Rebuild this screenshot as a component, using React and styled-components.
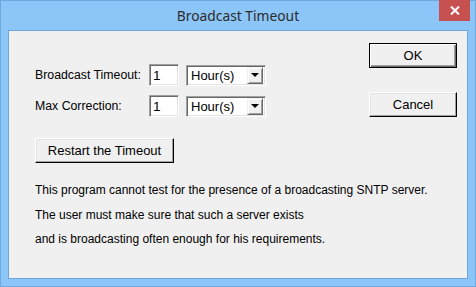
import React from "react";
import styled, { createGlobalStyle } from "styled-components";

const GlobalStyle = createGlobalStyle`
  html, body {
    margin: 0;
    padding: 0;
    background: #8cc5f7;
  }
  * {
    box-sizing: border-box;
  }
`;

const Window = styled.div`
  width: 476px;
  height: 287px;
  background-color: #8cc5f7;
  border: 1px solid #6ea9df;
  display: flex;
  flex-direction: column;
  padding: 0 7px 7px 7px;
`;

const TitleBar = styled.div`
  height: 29px;
  position: relative;
  display: flex;
  justify-content: center;
  align-items: center;
  font-family: "Noto Sans", "Open Sans", sans-serif;
  font-size: 13.8px;
  color: #2b2b2b;
`;

const CloseButton = styled.div`
  position: absolute;
  top: -1px;
  right: -2px;
  width: 31px;
  height: 21px;
  background-color: #c75050;
  display: flex;
  justify-content: center;
  align-items: center;
`;

const Client = styled.div`
  flex: 1;
  background-color: #f0f0f0;
  border: 1px solid #6fa7dc;
  padding: 12px 10px 0 26px;
  font-family: "Liberation Sans", Arial, sans-serif;
  font-size: 12.3px;
  color: #000;
`;

const TopSection = styled.div`
  display: flex;
  justify-content: space-between;
`;

const FormColumn = styled.div`
  padding-top: 21px;
  display: flex;
  flex-direction: column;
`;

const FieldGrid = styled.div`
  display: grid;
  grid-template-columns: 107px 30px 80px;
  column-gap: 7px;
  row-gap: 9px;
  align-items: center;
`;

const Label = styled.div`
  line-height: 22px;
  white-space: nowrap;
`;

const Sunken = styled.div`
  height: ${p => (p.$tall ? 22 : 21)}px;
  background: #fff;
  border-top: 1px solid #a0a0a0;
  border-left: 1px solid #a0a0a0;
  border-right: 1px solid #fff;
  border-bottom: 1px solid #fff;
  box-shadow: inset 1px 1px 0 #696969, inset -1px -1px 0 #e3e3e3;
  display: flex;
  align-items: center;
`;

const InputText = styled.span`
  padding-left: 3px;
  font-size: 13.5px;
`;

const SelectText = styled.span`
  flex: 1;
  padding-left: 4px;
  font-size: 13px;
`;

const DropButton = styled.div`
  width: 16px;
  height: 17px;
  margin-right: 2px;
  background: #f0f0f0;
  border-top: 1px solid #f0f0f0;
  border-left: 1px solid #f0f0f0;
  border-right: 1px solid #696969;
  border-bottom: 1px solid #696969;
  box-shadow: inset 1px 1px 0 #fff, inset -1px -1px 0 #a0a0a0;
  display: flex;
  justify-content: center;
  align-items: center;
`;

const Arrow = styled.div`
  width: 0;
  height: 0;
  border-left: 4px solid transparent;
  border-right: 4px solid transparent;
  border-top: 4px solid #000;
`;

const Button = styled.button`
  width: ${p => p.$width}px;
  height: 25px;
  background: #f0f0f0;
  font-family: "Liberation Sans", Arial, sans-serif;
  font-size: 13px;
  color: #000;
  padding: 0;
  border-top: 1px solid ${p => (p.$default ? "#000" : "#fff")};
  border-left: 1px solid ${p => (p.$default ? "#000" : "#fff")};
  border-right: 1px solid #000;
  border-bottom: 1px solid #000;
  box-shadow: ${p =>
    p.$default
      ? "inset 1px 1px 0 #fff, inset -1px -1px 0 #696969, inset -2px -2px 0 #a0a0a0"
      : "inset -1px -1px 0 #a0a0a0, inset 1px 1px 0 #e3e3e3"};
`;

const RestartRow = styled.div`
  margin-top: 21px;
`;

const ButtonColumn = styled.div`
  display: flex;
  flex-direction: column;
  gap: 24px;
`;

const Message = styled.div`
  margin-top: 15px;
  font-size: 12px;
  line-height: 24.5px;
  white-space: nowrap;
`;

const Hours = () => (
  <Sunken>
    <SelectText>Hour(s)</SelectText>
    <DropButton>
      <Arrow />
    </DropButton>
  </Sunken>
);

export default function App() {
  return (
    <>
      <GlobalStyle />
      <Window>
        <TitleBar>
          Broadcast Timeout
          <CloseButton>
            <svg width="10" height="9" viewBox="0 0 10 9">
              <path d="M1 0.5 L9 8.5 M9 0.5 L1 8.5" stroke="#fff" strokeWidth="2" />
            </svg>
          </CloseButton>
        </TitleBar>
        <Client>
          <TopSection>
            <FormColumn>
              <FieldGrid>
                <Label>Broadcast Timeout:</Label>
                <Sunken $tall>
                  <InputText>1</InputText>
                </Sunken>
                <Hours />
                <Label>Max Correction:</Label>
                <Sunken $tall>
                  <InputText>1</InputText>
                </Sunken>
                <Hours />
              </FieldGrid>
              <RestartRow>
                <Button $width={139}>Restart the Timeout</Button>
              </RestartRow>
            </FormColumn>
            <ButtonColumn>
              <Button $width={88} $default>
                OK
              </Button>
              <Button $width={88}>Cancel</Button>
            </ButtonColumn>
          </TopSection>
          <Message>
            <div>This program cannot test for the presence of a broadcasting SNTP server.</div>
            <div>The user must make sure that such a server exists</div>
            <div>and is broadcasting often enough for his requirements.</div>
          </Message>
        </Client>
      </Window>
    </>
  );
}
